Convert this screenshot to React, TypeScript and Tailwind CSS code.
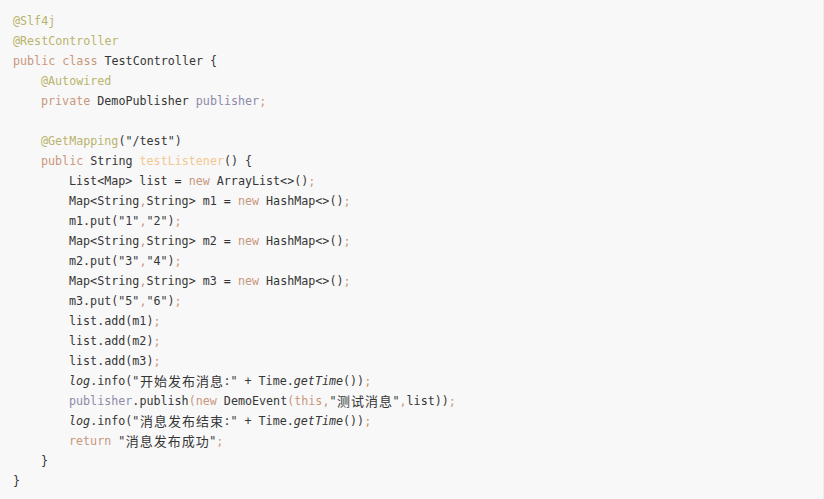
import React from "react";

type Tok = [string, string?];

const A = "text-[#bab46c]"; // annotation
const K = "text-[#c9977d]"; // keyword
const F = "text-[#8d8aa9]"; // field
const M = "text-[#f3c78f]"; // method decl
const P = "text-[#c9977d]"; // punctuation (comma/semicolon)
const I = "italic";
const CJK = "cjk";

const lines: { indent: number; toks: Tok[] }[] = [
  { indent: 0, toks: [["@Slf4j", A]] },
  { indent: 0, toks: [["@RestController", A]] },
  { indent: 0, toks: [["public ", K], ["class ", K], ["TestController {"]] },
  { indent: 1, toks: [["@Autowired", A]] },
  { indent: 1, toks: [["private ", K], ["DemoPublisher "], ["publisher", F], [";", P]] },
  { indent: 0, toks: [] },
  { indent: 1, toks: [["@GetMapping", A], ["(\"/test\")"]] },
  { indent: 1, toks: [["public ", K], ["String "], ["testListener", M], ["() {"]] },
  { indent: 2, toks: [["List<Map> list = "], ["new ", K], ["ArrayList<>()"], [";", P]] },
  { indent: 2, toks: [["Map<String"], [",", P], ["String> m1 = "], ["new ", K], ["HashMap<>()"], [";", P]] },
  { indent: 2, toks: [["m1.put(\"1\""], [",", P], ["\"2\")"], [";", P]] },
  { indent: 2, toks: [["Map<String"], [",", P], ["String> m2 = "], ["new ", K], ["HashMap<>()"], [";", P]] },
  { indent: 2, toks: [["m2.put(\"3\""], [",", P], ["\"4\")"], [";", P]] },
  { indent: 2, toks: [["Map<String"], [",", P], ["String> m3 = "], ["new ", K], ["HashMap<>()"], [";", P]] },
  { indent: 2, toks: [["m3.put(\"5\""], [",", P], ["\"6\")"], [";", P]] },
  { indent: 2, toks: [["list.add(m1)"], [";", P]] },
  { indent: 2, toks: [["list.add(m2)"], [";", P]] },
  { indent: 2, toks: [["list.add(m3)"], [";", P]] },
  {
    indent: 2,
    toks: [["log", I], [".info(\""], ["开始发布消息", CJK], [":\" + Time."], ["getTime", I], ["())"], [";", P]],
  },
  {
    indent: 2,
    toks: [
      ["publisher", F],
      [".publish"],
      ["(", P],
      ["new ", K],
      ["DemoEvent"],
      ["(", P],
      ["this", K],
      [",", P],
      ["\""],
      ["测试消息", CJK],
      ["\""],
      [",", P],
      ["list))"],
      [";", P],
    ],
  },
  {
    indent: 2,
    toks: [["log", I], [".info(\""], ["消息发布结束", CJK], [":\" + Time."], ["getTime", I], ["())"], [";", P]],
  },
  { indent: 2, toks: [["return ", K], ["\""], ["消息发布成功", CJK], ["\""], [";", P]] },
  { indent: 1, toks: [["}"]] },
  { indent: 0, toks: [["}"]] },
];

function Token({ t }: { t: Tok }) {
  const [text, cls] = t;
  if (cls === CJK) {
    return (
      <span className="inline-flex align-top">
        {Array.from(text).map((c, i) => (
          <span
            key={i}
            className="inline-block w-[14px] text-center text-[13px] [font-family:'Noto_Sans_CJK_SC','Noto_Sans',sans-serif]"
          >
            {c}
          </span>
        ))}
      </span>
    );
  }
  return <span className={cls}>{text}</span>;
}

export default function App() {
  return (
    <div className="w-[824px] h-[499px] bg-[#f8f8f8] border-r border-[#ececec] overflow-hidden">
      <div className="pt-[11px] pl-[13px] text-[#363636] text-[11.7px] leading-[20px] [font-family:'DejaVu_Sans_Mono','Liberation_Mono',monospace] whitespace-pre">
        {lines.map((l, i) => (
          <div key={i} className="h-[20px]">
            {l.indent === 1 ? (
              <span className="inline-block w-[28px]" />
            ) : l.indent === 2 ? (
              <span className="inline-block w-[56px]" />
            ) : null}
            {l.toks.map((t, j) => (
              <Token key={j} t={t} />
            ))}
          </div>
        ))}
      </div>
    </div>
  );
}
